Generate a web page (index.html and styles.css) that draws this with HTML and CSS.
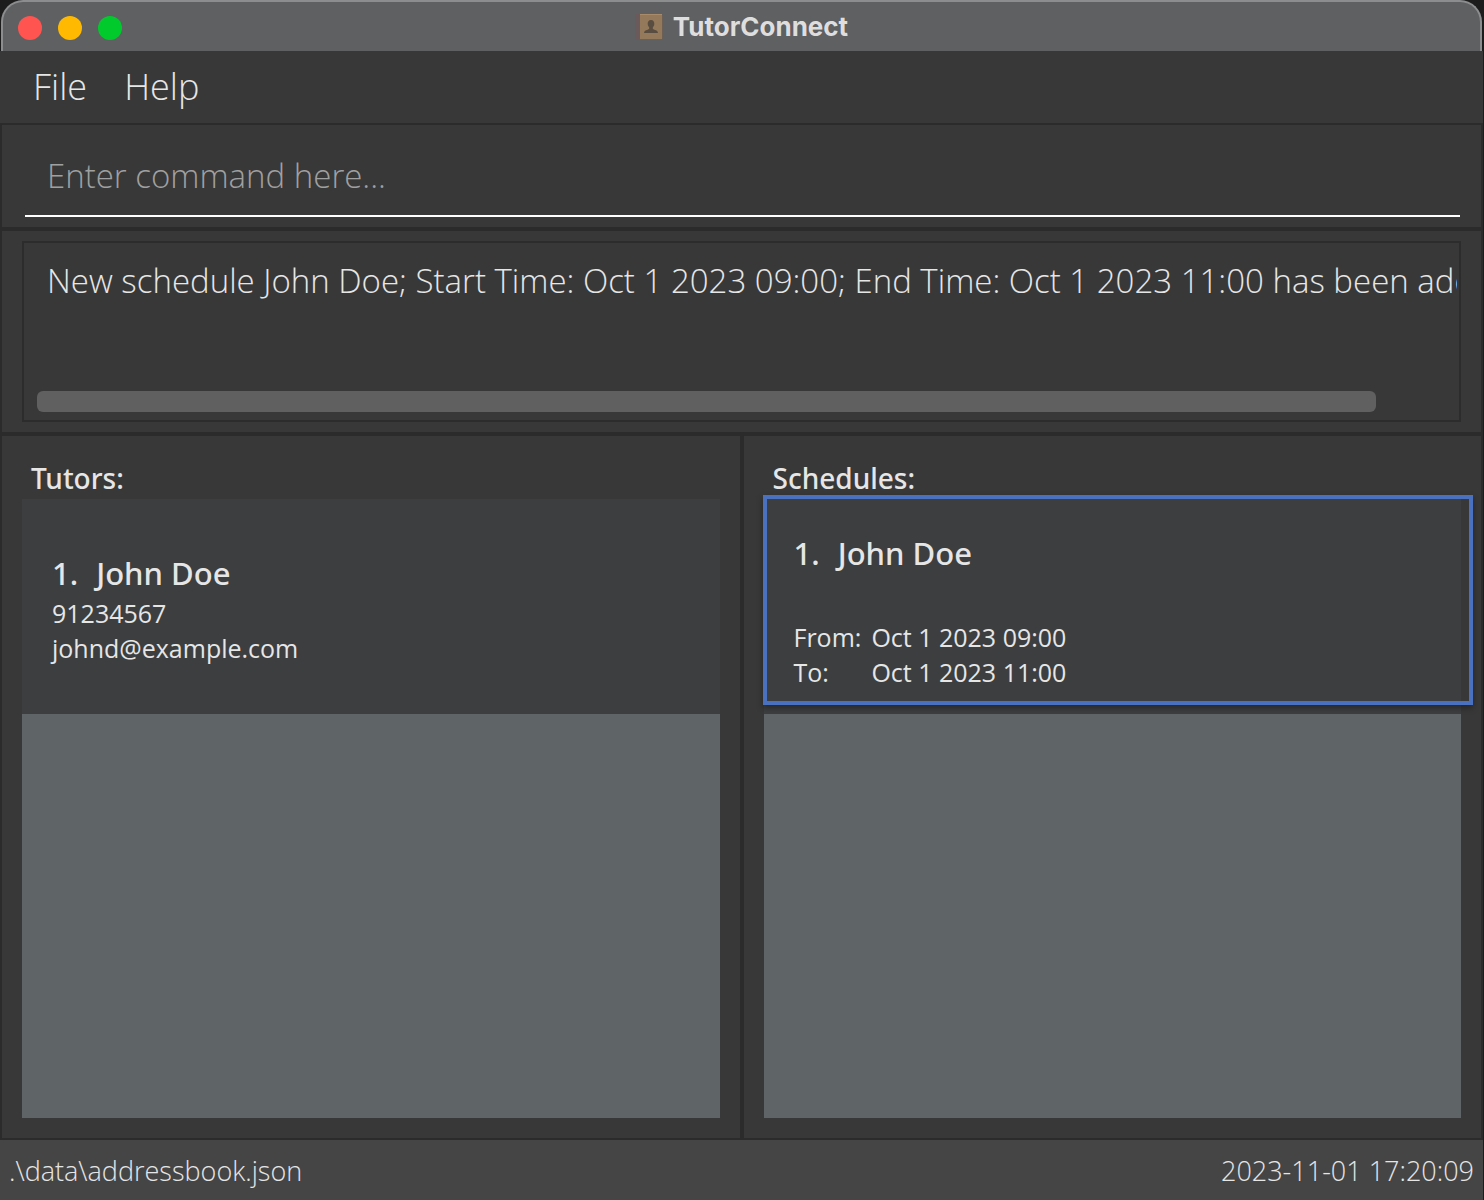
FILE: index.html
```html
<!DOCTYPE html>
<html lang="en">
<head>
<meta charset="utf-8">
<meta name="viewport" content="width=device-width, initial-scale=1">
<title>TutorConnect</title>
<link rel="stylesheet" href="styles.css">
</head>
<body>
<div class="window">
  <header class="titlebar">
    <div class="lights">
      <button class="light light-close" type="button" aria-label="Close"></button>
      <button class="light light-minimize" type="button" aria-label="Minimize"></button>
      <button class="light light-zoom" type="button" aria-label="Zoom"></button>
    </div>
    <h1 class="title">
      <svg class="title-icon" width="28" height="28" viewBox="0 0 28 28" aria-hidden="true">
        <rect x="0" y="1" width="28" height="26" rx="2" fill="#6b5f56"/>
        <rect x="0" y="1" width="5" height="26" rx="1" fill="#6a5a5b"/>
        <rect x="5" y="1" width="22" height="25" fill="#94795a"/>
        <path d="M5 1h22v1H5z" fill="#a88b69"/>
        <path d="M16 7c-2.300 0-3.500 1.700-3.300 4 .1 1.700.9 2.700 1.500 3.500.2 1.300-.2 1.700-1.600 2.200-2.200.7-3.400 1.200-3.600 3.300h14c-.2-2.100-1.400-2.600-3.600-3.300-1.400-.5-1.800-.9-1.600-2.200.6-.8 1.400-1.800 1.500-3.500.2-2.300-1-4-3.300-4z" fill="#594c40"/>
      </svg>
      <span>TutorConnect</span>
    </h1>
  </header>

  <nav class="menubar">
    <button class="menu" type="button">File</button>
    <button class="menu" type="button">Help</button>
  </nav>

  <main class="content">
    <form class="panel command">
      <input class="command-input" type="text" placeholder="Enter command here..." aria-label="Command">
    </form>

    <section class="panel result">
      <div class="result-box">
        <textarea class="result-text" readonly wrap="off" rows="1" aria-label="Result">New schedule John Doe; Start Time: Oct 1 2023 09:00; End Time: Oct 1 2023 11:00 has been added</textarea>
        <div class="scroll-track"><div class="scroll-thumb"></div></div>
      </div>
    </section>

    <div class="columns">
      <section class="panel column">
        <h2 class="column-title">Tutors:</h2>
        <div class="list">
          <article class="card tutor">
            <h3 class="name"><span>1.</span><span>John Doe</span></h3>
            <p class="detail">91234567</p>
            <p class="detail">johnd@example.com</p>
          </article>
        </div>
      </section>
      <section class="panel column">
        <h2 class="column-title">Schedules:</h2>
        <div class="list">
          <article class="card schedule">
            <h3 class="name"><span>1.</span><span>John Doe</span></h3>
            <dl class="times">
              <dt>From:</dt><dd>Oct 1 2023 09:00</dd>
              <dt>To:</dt><dd>Oct 1 2023 11:00</dd>
            </dl>
          </article>
          <div class="highlight"></div>
        </div>
      </section>
    </div>
  </main>

  <footer class="statusbar">
    <span>.\data\addressbook.json</span>
    <time datetime="2023-11-01T17:20:09">2023-11-01 17:20:09</time>
  </footer>
</div>
</body>
</html>
```
FILE: styles.css
```css
* {
  box-sizing: border-box;
  margin: 0;
  padding: 0;
}

body {
  background: #1c1c1c;
  color: #e6e6e6;
  font-family: "Open Sans", "Noto Sans", sans-serif;
}

button,
input,
textarea {
  border: 0;
  background: none;
  color: inherit;
  font: inherit;
  outline: 0;
}

.window {
  display: flex;
  flex-direction: column;
  min-height: 100vh;
  margin-right: 1px;
}

.titlebar {
  display: grid;
  grid-template-columns: 1fr auto 1fr;
  align-items: center;
  height: 51px;
  margin: 0 1px;
  padding: 2px 15px 0;
  border: 2px solid #8b8d8f;
  border-bottom: 0;
  border-radius: 22px 22px 0 0;
  background: #5f6062;
}

.lights {
  display: flex;
  gap: 16px;
}

.light {
  width: 24px;
  height: 24px;
  border-radius: 50%;
}

.light-close { background: #ff5450; }
.light-minimize { background: #ffb900; }
.light-zoom { background: #00ca2c; }

.title {
  display: flex;
  align-items: center;
  gap: 10px;
  padding-bottom: 2px;
  color: #dededf;
  font: 700 26px/32px Inter, sans-serif;
}

.menubar {
  display: flex;
  gap: 37px;
  height: 72px;
  padding: 0 33px 2px;
  background: #383838;
}

.menu {
  font-size: 36px;
  font-weight: 300;
}

.content {
  display: flex;
  flex: 1;
  flex-direction: column;
}

.panel {
  border: 2px solid #2b2b2b;
  background: #383838;
}

.command {
  padding: 16px 21px 10px 23px;
}

.command-input {
  display: block;
  width: 100%;
  height: 76px;
  padding: 0 22px 6px;
  border-bottom: 2px solid #fff;
  font-size: 33px;
  font-weight: 300;
}

.command-input::placeholder {
  color: #a0a0a0;
  opacity: 1;
}

.result {
  padding: 10px 20px;
}

.result-box {
  display: flex;
  flex-direction: column;
  justify-content: space-between;
  height: 181px;
  padding: 14px 2px 8px;
  border: 2px solid #2c2c2c;
}

.result-text {
  height: 48px;
  padding-left: 21px;
  overflow: hidden;
  font-size: 33px;
  font-weight: 300;
  line-height: 48px;
  resize: none;
  white-space: pre;
}

.scroll-track {
  padding: 0 11px;
}

.scroll-thumb {
  width: 95%;
  height: 21px;
  border-radius: 6px;
  background: #606060;
}

.columns {
  display: grid;
  flex: 1;
  grid-template-columns: 1fr 1fr;
}

.column {
  display: flex;
  flex-direction: column;
  padding: 21px 20px 20px;
}

.column-title {
  padding-left: 9px;
  font-family: "Noto Sans", sans-serif;
  font-size: 28px;
  font-weight: 500;
  line-height: 42px;
}

.list {
  position: relative;
  flex: 1;
  background: #5f6466;
}

.card {
  height: 215px;
  padding: 0 30px;
  background: #3c3e3f;
}

.tutor { padding-top: 51px; }
.schedule { padding-top: 31px; }

.name {
  display: flex;
  gap: 18px;
  font-family: "Noto Sans", sans-serif;
  font-size: 31px;
  font-weight: 500;
  line-height: 46px;
}

.detail,
.times {
  font-size: 25px;
  line-height: 35px;
}

.times {
  display: grid;
  grid-template-columns: auto 1fr;
  column-gap: 10px;
  padding-top: 44px;
}

.highlight {
  position: absolute;
  top: -4px;
  right: -12px;
  left: -1px;
  height: 210px;
  border: 4px solid #4a70c0;
  box-shadow: 0 3px 6px rgba(0, 0, 0, 0.35);
}

.statusbar {
  display: flex;
  align-items: center;
  justify-content: space-between;
  height: 60px;
  padding: 0 9px;
  background: #454545;
  font-size: 27px;
  font-weight: 300;
}
```
